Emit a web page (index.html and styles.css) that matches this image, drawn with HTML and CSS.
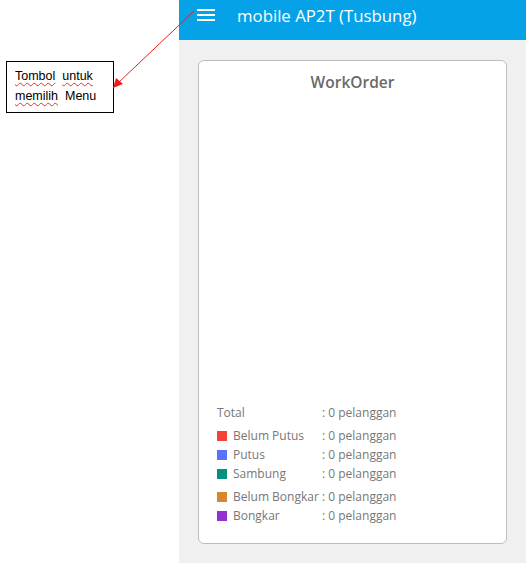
FILE: index.html
```html
<!DOCTYPE html>
<html>
<head>
<meta charset="utf-8">
<link rel="stylesheet" href="styles.css">
</head>
<body>
<div class="page">
  <div class="doc">
    <div class="note">
      <p><span class="sp">Tombol</span>&nbsp; <span class="sp">untuk</span></p>
      <p><span class="sp">memilih</span>&nbsp; Menu</p>
    </div>
  </div>
  <div class="phone">
    <header class="appbar">
      <span class="burger"><i></i><i></i><i></i></span>
      <span class="title">mobile AP2T (Tusbung)</span>
    </header>
    <main class="content">
      <section class="card">
        <h1 class="card-title">WorkOrder</h1>
        <div class="chart"></div>
        <div class="legend">
          <div class="row total"><span class="label">Total</span><span class="value">: 0 pelanggan</span></div>
          <div class="group">
            <div class="row"><span class="label"><b class="sw red"></b>Belum Putus</span><span class="value">: 0 pelanggan</span></div>
            <div class="row"><span class="label"><b class="sw blue"></b>Putus</span><span class="value">: 0 pelanggan</span></div>
            <div class="row"><span class="label"><b class="sw teal"></b>Sambung</span><span class="value">: 0 pelanggan</span></div>
          </div>
          <div class="group">
            <div class="row"><span class="label"><b class="sw orange"></b>Belum Bongkar</span><span class="value">: 0 pelanggan</span></div>
            <div class="row"><span class="label"><b class="sw purple"></b>Bongkar</span><span class="value">: 0 pelanggan</span></div>
          </div>
        </div>
      </section>
    </main>
  </div>
  <svg class="arrow" width="526" height="563" viewBox="0 0 526 563">
    <line x1="194" y1="11" x2="118" y2="83" stroke="#ee1c1c" stroke-width="1"/>
    <polygon points="113,88 116,78 123,84" fill="#ee1c1c"/>
  </svg>
</div>
</body>
</html>
```
FILE: styles.css
```css
* { box-sizing: border-box; }
html, body { margin: 0; padding: 0; background: #fff; }
.page {
  position: relative;
  display: flex;
  width: 526px;
  height: 563px;
  overflow: hidden;
}
.doc {
  width: 179px;
  flex: none;
  padding: 61px 0 0 6px;
}
.note {
  width: 108px;
  height: 52px;
  border: 1px solid #000;
  padding: 4px 0 0 8px;
  font-family: "Liberation Sans", Arial, sans-serif;
  font-size: 12.5px;
  color: #000;
}
.note p { margin: 0; line-height: 20px; white-space: nowrap; }
.sp {
  text-decoration: underline wavy #e03030;
  text-decoration-thickness: 1px;
  text-underline-offset: 2px;
}
.phone {
  flex: 1;
  display: flex;
  flex-direction: column;
  background: #f0f0f0;
}
.appbar {
  height: 40px;
  background: #05a2e8;
  display: flex;
  align-items: center;
  padding-left: 18px;
  color: #fff;
}
.burger {
  display: flex;
  flex-direction: column;
  gap: 3px;
  width: 18px;
  margin-top: -11px;
}
.burger i {
  display: block;
  height: 2px;
  background: #fff;
}
.title {
  margin-left: 22px;
  margin-top: -10px;
  font-family: "Open Sans", sans-serif;
  font-size: 16.8px;
}
.content {
  flex: 1;
  padding: 20px 19px 18px 19px;
}
.card {
  height: 484px;
  background: #fff;
  border: 1.5px solid #bdbdbd;
  border-radius: 6px;
  display: flex;
  flex-direction: column;
  padding: 10px 0 0 18px;
}
.card-title {
  margin: 0 0 0 -18px;
  text-align: center;
  font-family: "Open Sans", sans-serif;
  font-weight: 600;
  font-size: 15.5px;
  color: #6a6a6a;
  line-height: 22px;
}
.chart { height: 310px; }
.legend {
  font-family: "Open Sans", sans-serif;
  font-size: 12px;
  color: #777;
}
.row {
  display: flex;
  height: 19px;
  align-items: center;
  white-space: nowrap;
}
.group { margin-top: 4px; }
.label {
  width: 105px;
  display: flex;
  align-items: center;
}
.sw {
  width: 10px;
  height: 10px;
  margin-right: 6px;
  display: inline-block;
}
.red { background: #f44336; }
.blue { background: #5b72fe; }
.teal { background: #00917f; }
.orange { background: #d5862f; }
.purple { background: #9330d2; }
.arrow {
  position: absolute;
  left: 0;
  top: 0;
  pointer-events: none;
}
```
